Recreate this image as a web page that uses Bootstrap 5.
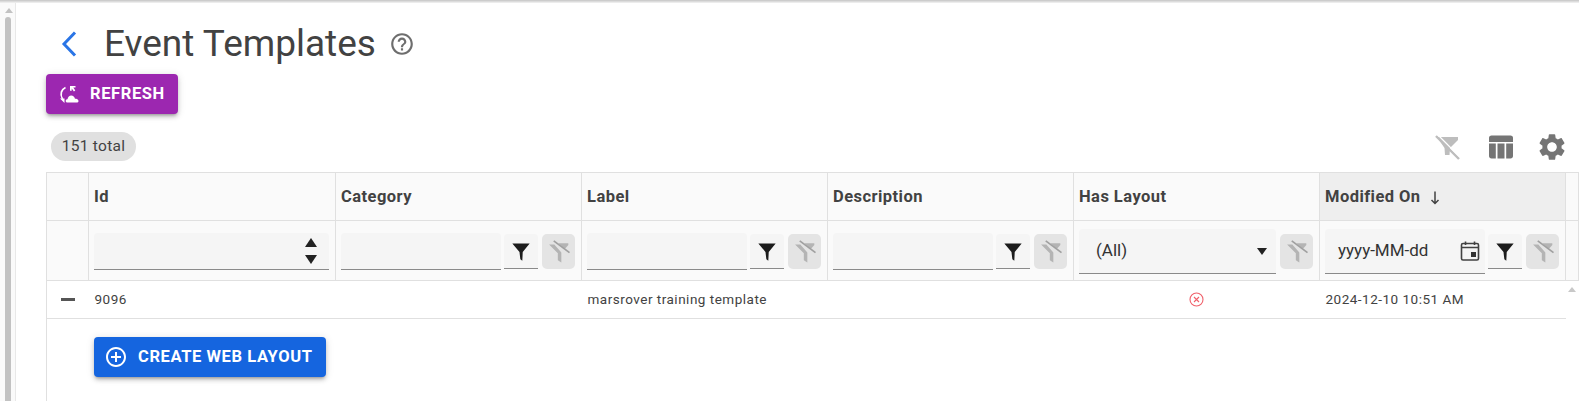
<!DOCTYPE html>
<html lang="en">
<head>
    <meta charset="UTF-8">
    <meta name="viewport" content="width=device-width, initial-scale=1.0">
    <title>Event Templates</title>
    <link rel="stylesheet" href="https://cdn.jsdelivr.net/npm/bootstrap@5.3.0/dist/css/bootstrap.min.css">
    <style>
        html, body {
            height: 100%;
            overflow: hidden;
        }
        body {
            font-family: Roboto, "Liberation Sans", sans-serif;
            color: #424242;
            background: #fff;
        }
        .top-edge {
            height: 3px;
            background: linear-gradient(#c4c4c4, #f4f4f4);
        }
        .page-scroll {
            width: 16px;
            flex: none;
            background: #fafafa;
            border-right: 1px solid #e8e8e8;
            padding: 2px 4px 0 5px;
        }
        .page-scroll .arrow {
            width: 0;
            height: 0;
            margin: 3px auto 4px;
            border: 4px solid transparent;
            border-top: 0;
            border-bottom: 5px solid #c2c2c2;
        }
        .page-scroll .thumb {
            height: 400px;
            background: #c2c2c2;
            border-radius: 3px 3px 0 0;
        }
        .page-main {
            width: 1533px;
            margin-left: 30px;
            flex: none;
        }
        .title-row {
            height: 71px;
            padding-top: 14px;
            padding-bottom: 4px;
        }
        .back-arrow {
            width: 16px;
            margin-left: 15px;
            margin-right: 27px;
        }
        .page-title {
            font-size: 37px;
            font-weight: 400;
            line-height: 48px;
            margin: 0 13px 0 0;
            color: #424242;
        }
        .ev-btn {
            display: inline-flex;
            align-items: center;
            height: 40px;
            border: 0;
            border-radius: 4px;
            color: #fff;
            font-size: 16.5px;
            font-weight: 700;
            letter-spacing: .6px;
            box-shadow: 0 3px 3px -2px rgba(0,0,0,.25), 0 3px 4px rgba(0,0,0,.16), 0 1px 8px rgba(0,0,0,.12);
        }
        .btn-refresh {
            width: 132px;
            padding-left: 13px;
            gap: 10px;
            background: #9c27b0;
        }
        .btn-create {
            width: 232px;
            padding-left: 10px;
            gap: 10px;
            background: #1565df;
        }
        .tool-row {
            height: 58px;
            padding-top: 18px;
        }
        .total-chip {
            margin-left: 5px;
            height: 29px;
            width: 85px;
            line-height: 29px;
            text-align: center;
            border-radius: 15px;
            background: #e0e0e0;
            font-size: 15.5px;
            letter-spacing: .3px;
        }
        .tool-icons {
            margin-right: 11px;
            margin-top: 2px;
        }
        .tool-table {
            margin: 0 22px 0 28px;
        }
        .tool-gear {
            margin-top: -3px;
        }
        .ev-table {
            table-layout: fixed;
            width: 1532px;
            border-collapse: collapse;
            margin: 0;
        }
        .ev-table td, .ev-table th {
            border: 1px solid #e0e0e0;
            padding: 0 6px 0 5px;
            vertical-align: middle;
            background: #fff;
            color: #424242;
            box-shadow: none;
        }
        .ev-table .head-row th {
            height: 48px;
            padding-top: 2px;
            font-size: 16.5px;
            font-weight: 700;
            background: #fafafa;
            letter-spacing: .45px;
        }
        .ev-table .head-row th.sorted {
            background: #eeeeee;
        }
        .ev-table .filter-row td {
            height: 60px;
            padding-top: 2px;
            background: #fafafa;
        }
        .ev-table .data-row td {
            height: 38px;
            font-size: 13.5px;
            letter-spacing: .5px;
            border-left: 0;
            border-right: 0;
            padding-left: 6px;
        }
        .ev-table .data-row td:first-child {
            border-left: 1px solid #e0e0e0;
        }
        .ev-table .data-row td.row-scroll, .ev-table .detail-row td.row-scroll {
            border: 0;
            padding: 0;
            vertical-align: top;
        }
        .row-scroll .arrow {
            width: 0;
            height: 0;
            margin: 6px auto 0;
            border: 4px solid transparent;
            border-top: 0;
            border-bottom: 5px solid #c8c8c8;
        }
        .ev-table .detail-row td {
            height: 90px;
            border-left: 1px solid #e0e0e0;
            border-right: 0;
            border-bottom: 0;
            padding: 18px 0 0 47px;
            vertical-align: top;
        }
        .minus-bar {
            width: 14px;
            height: 3px;
            margin-left: 8px;
            background: #555;
        }
        .fake-input {
            height: 37px;
            flex: 1 1 0;
            min-width: 0;
            margin-top: -1px;
            background: #f5f5f5;
            border-bottom: 1px solid #8a8a8a;
            border-radius: 4px 4px 0 0;
            font-size: 17px;
            color: #333;
        }
        .fake-input.tall {
            height: 45px;
            margin-top: 0;
        }
        .filter-cell {
            gap: 3px;
            align-items: center;
        }
        .filter-btn, .clear-btn {
            height: 35px;
            flex: none;
        }
        .filter-btn {
            width: 34px;
            background: #f5f5f5;
            border-bottom: 1px solid #8a8a8a;
            border-radius: 4px 4px 0 0;
        }
        .clear-btn {
            width: 33px;
            background: #e4e4e4;
            border-radius: 5px;
            margin-left: 1px;
        }
        .spin-icons {
            gap: 8px;
            margin-right: 11px;
        }
        .select-text { padding-left: 17px; }
        .date-text { padding-left: 13px; }
        .caret-down {
            width: 0;
            height: 0;
            margin-right: 9px;
            border: 5.500px solid transparent;
            border-bottom: 0;
            border-top: 7px solid #222;
        }
    </style>
</head>
<body>

    <svg width="0" height="0" class="position-absolute">
        <symbol id="ico-funnel" viewBox="0 0 24 24">
            <polygon points="4,5 20,5 13.6,13 13.2,21 11.4,19.6 10.6,13"/>
        </symbol>
        <symbol id="ico-funnel-off" viewBox="0 0 24 24">
            <polygon points="3.500,5.500 8,5.500 14,12.500 14,21 11,19 11,13"/>
            <polygon points="11.500,4.500 20,4.500 20,6 17,9.500"/>
            <path d="M7.500 2.500 21 12.500" stroke-width="1.500" stroke="currentColor" fill="none"/>
        </symbol>
    </svg>

    <div class="top-edge"></div>

    <div class="d-flex">
        <div class="page-scroll">
            <div class="arrow"></div>
            <div class="thumb"></div>
        </div>

        <div class="page-main">
            <div class="title-row d-flex align-items-center">
                <svg class="back-arrow" viewBox="0 0 16 26" height="26">
                    <path d="M14 1.500 3 13l11 11.500" fill="none" stroke="#2a75e6" stroke-width="3"/>
                </svg>
                <h1 class="page-title">Event Templates</h1>
                <svg width="26" height="26" viewBox="0 0 24 24" fill="#6e6e6e">
                    <path d="M11 18h2v-2h-2v2zm1-16C6.48 2 2 6.48 2 12s4.48 10 10 10 10-4.48 10-10S17.52 2 12 2zm0 18c-4.41 0-8-3.59-8-8s3.59-8 8-8 8 3.59 8 8-3.59 8-8 8zm0-14c-2.21 0-4 1.79-4 4h2c0-1.1.9-2 2-2s2 .9 2 2c0 2-3 1.75-3 5h2c0-2.25 3-2.5 3-5 0-2.21-1.79-4-4-4z"/>
                </svg>
            </div>

            <button type="button" class="ev-btn btn-refresh">
                <svg width="21" height="19" viewBox="0 0 21 19">
                    <path d="M6.500 2.500C2.500 4.500 0.500 9 3.500 14" fill="none" stroke="#fff" stroke-width="1.700"/>
                    <path d="M1 13.500h4.500V18z" fill="#fff"/>
                    <path d="M11 1h5.500v1.600h-2.200l2 3-1.400.9-2.200-3v2.300H11z" fill="#fff"/>
                    <path d="M8.500 17.500c-1.200 0-1.800-.8-1.800-1.600 0-1 .8-1.700 1.800-1.700.3-2.400 2-3.800 3.700-3.800 2 0 3.400 1.300 3.800 3.400 1.700 0 3.500.6 3.500 2.100 0 1-.8 1.600-2 1.600z" fill="#fff"/>
                </svg>
                REFRESH
            </button>

            <div class="tool-row d-flex justify-content-between align-items-start">
                <div class="total-chip">151 total</div>
                <div class="tool-icons d-flex">
                    <svg width="26" height="26" viewBox="0 0 26 26">
                        <polygon points="3,3 24,3 24,6 16,14 15.500,21 11,21 10.500,14" fill="#bdbdbd"/>
                        <path d="M2 2 25 25" stroke="#bdbdbd" stroke-width="2.400"/>
                        <path d="M3.500 0.500 26 23" stroke="#fff" stroke-width="1.200"/>
                    </svg>
                    <svg width="26" height="26" viewBox="0 0 26 26" fill="#757575" class="tool-table">
                        <path d="M1 8V3.500C1 2.500 2 1.500 3.500 1.500h19C24 1.500 25 2.500 25 3.500V8z"/>
                        <path d="M1 9.500h6.800V24.500H3.500C2 24.500 1 23.500 1 22z"/>
                        <rect x="9.500" y="9.500" width="7" height="15"/>
                        <path d="M18.200 9.500H25V22c0 1.500-1 2.500-2.500 2.500h-4.300z"/>
                    </svg>
                    <svg width="32" height="32" viewBox="0 0 24 24" fill="#757575" class="tool-gear">
                        <path d="M19.14 12.94c.04-.3.06-.61.06-.94 0-.32-.02-.64-.07-.94l2.030-1.580c.18-.14.23-.41.12-.61l-1.920-3.320c-.12-.22-.37-.29-.59-.22l-2.390.96c-.5-.38-1.030-.7-1.620-.94l-.36-2.540c-.04-.24-.24-.41-.48-.41h-3.840c-.24 0-.43.17-.47.41l-.36 2.540c-.59.24-1.130.57-1.620.94l-2.390-.96c-.22-.08-.47 0-.59.22L2.740 8.870c-.12.21-.08.47.12.61l2.030 1.580c-.05.3-.09.63-.09.94s.02.64.07.94l-2.030 1.580c-.18.14-.23.41-.12.61l1.920 3.320c.12.22.37.29.59.22l2.390-.96c.5.38 1.030.7 1.620.94l.36 2.540c.05.24.24.41.48.41h3.840c.24 0 .44-.17.47-.41l.36-2.540c.59-.24 1.130-.56 1.620-.94l2.390.96c.22.08.47 0 .59-.22l1.920-3.320c.12-.22.07-.47-.12-.61l-2.010-1.580zM12 15.600c-1.980 0-3.600-1.620-3.600-3.600s1.620-3.600 3.600-3.600 3.600 1.620 3.600 3.600-1.620 3.600-3.600 3.600z"/>
                    </svg>
                </div>
            </div>

            <table class="table ev-table">
                <colgroup>
                    <col style="width:42px">
                    <col style="width:247px">
                    <col style="width:246px">
                    <col style="width:246px">
                    <col style="width:246px">
                    <col style="width:246px">
                    <col style="width:246px">
                    <col style="width:13px">
                </colgroup>
                <thead>
                    <tr class="head-row">
                        <th></th>
                        <th>Id</th>
                        <th>Category</th>
                        <th>Label</th>
                        <th>Description</th>
                        <th>Has Layout</th>
                        <th class="sorted">
                            Modified On
                            <svg width="12" height="16" viewBox="0 0 12 16" class="ms-1">
                                <path d="M6 1.500v12M2.500 10 6 13.500 9.500 10" fill="none" stroke="#424242" stroke-width="1.500"/>
                            </svg>
                        </th>
                        <th></th>
                    </tr>
                </thead>
                <tbody>
                    <tr class="filter-row">
                        <td></td>
                        <td>
                            <div class="fake-input d-flex justify-content-end align-items-center">
                                <div class="spin-icons d-flex flex-column">
                                    <svg width="14" height="9" viewBox="0 0 14 9" class="d-block"><polygon points="7,0 13,9 1,9" fill="#222"/></svg>
                                    <svg width="14" height="9" viewBox="0 0 14 9" class="d-block"><polygon points="1,0 13,0 7,9" fill="#222"/></svg>
                                </div>
                            </div>
                        </td>
                        <td>
                            <div class="filter-cell d-flex">
                                <div class="fake-input"></div>
                                <div class="filter-btn d-flex align-items-center justify-content-center"><svg width="26" height="26" fill="#1c1c1c"><use href="#ico-funnel"/></svg></div>
                                <div class="clear-btn d-flex align-items-center justify-content-center"><svg width="28" height="28" fill="#b4b4b4" color="#a0a0a0"><use href="#ico-funnel-off"/></svg></div>
                            </div>
                        </td>
                        <td>
                            <div class="filter-cell d-flex">
                                <div class="fake-input"></div>
                                <div class="filter-btn d-flex align-items-center justify-content-center"><svg width="26" height="26" fill="#1c1c1c"><use href="#ico-funnel"/></svg></div>
                                <div class="clear-btn d-flex align-items-center justify-content-center"><svg width="28" height="28" fill="#b4b4b4" color="#a0a0a0"><use href="#ico-funnel-off"/></svg></div>
                            </div>
                        </td>
                        <td>
                            <div class="filter-cell d-flex">
                                <div class="fake-input"></div>
                                <div class="filter-btn d-flex align-items-center justify-content-center"><svg width="26" height="26" fill="#1c1c1c"><use href="#ico-funnel"/></svg></div>
                                <div class="clear-btn d-flex align-items-center justify-content-center"><svg width="28" height="28" fill="#b4b4b4" color="#a0a0a0"><use href="#ico-funnel-off"/></svg></div>
                            </div>
                        </td>
                        <td>
                            <div class="filter-cell d-flex">
                                <div class="fake-input tall d-flex align-items-center justify-content-between">
                                    <span class="select-text">(All)</span>
                                    <span class="caret-down"></span>
                                </div>
                                <div class="clear-btn d-flex align-items-center justify-content-center"><svg width="28" height="28" fill="#b4b4b4" color="#a0a0a0"><use href="#ico-funnel-off"/></svg></div>
                            </div>
                        </td>
                        <td>
                            <div class="filter-cell d-flex">
                                <div class="fake-input tall d-flex align-items-center justify-content-between">
                                    <span class="date-text">yyyy-MM-dd</span>
                                    <svg width="22" height="22" viewBox="0 0 22 22" class="me-1">
                                        <rect x="2.500" y="3.500" width="17" height="16.500" rx="1.500" fill="none" stroke="#424242" stroke-width="1.600"/>
                                        <path d="M3 7.500h16M6.500 1.500v3.500M15.500 1.500v3.500" stroke="#424242" stroke-width="1.600" fill="none"/>
                                        <rect x="12" y="12" width="5" height="5" fill="#333"/>
                                    </svg>
                                </div>
                                <div class="filter-btn d-flex align-items-center justify-content-center"><svg width="26" height="26" fill="#1c1c1c"><use href="#ico-funnel"/></svg></div>
                                <div class="clear-btn d-flex align-items-center justify-content-center"><svg width="28" height="28" fill="#b4b4b4" color="#a0a0a0"><use href="#ico-funnel-off"/></svg></div>
                            </div>
                        </td>
                        <td></td>
                    </tr>
                    <tr class="data-row">
                        <td><div class="minus-bar"></div></td>
                        <td>9096</td>
                        <td></td>
                        <td>marsrover training template</td>
                        <td></td>
                        <td class="text-center">
                            <svg width="15" height="15" viewBox="0 0 15 15" class="d-block mx-auto">
                                <circle cx="7.500" cy="7.500" r="6.500" fill="none" stroke="#f0606a" stroke-width="1.100"/>
                                <path d="M5 5l5 5M10 5l-5 5" stroke="#f0606a" stroke-width="1.100"/>
                            </svg>
                        </td>
                        <td>2024-12-10 10:51 AM</td>
                        <td class="row-scroll"><div class="arrow"></div></td>
                    </tr>
                    <tr class="detail-row">
                        <td colspan="7">
                            <button type="button" class="ev-btn btn-create">
                                <svg width="24" height="24" viewBox="0 0 24 24" fill="#fff">
                                    <path d="M13 7h-2v4H7v2h4v4h2v-4h4v-2h-4V7zm-1-5C6.480 2 2 6.480 2 12s4.480 10 10 10 10-4.480 10-10S17.520 2 12 2zm0 18c-4.410 0-8-3.590-8-8s3.590-8 8-8 8 3.590 8 8-3.590 8-8 8z"/>
                                </svg>
                                CREATE WEB LAYOUT
                            </button>
                        </td>
                        <td class="row-scroll"></td>
                    </tr>
                </tbody>
            </table>
        </div>
    </div>

    <script src="https://cdn.jsdelivr.net/npm/bootstrap@5.3.0/dist/js/bootstrap.bundle.min.js"></script>
</body>
</html>
